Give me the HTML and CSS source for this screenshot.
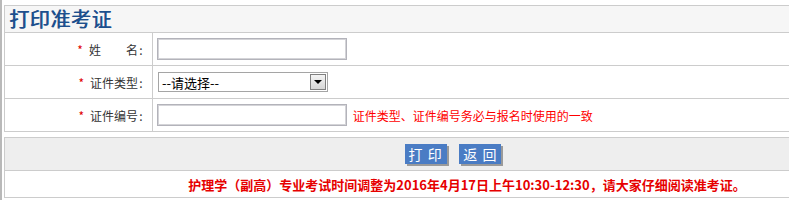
FILE: index.html
```html
<!DOCTYPE html>
<html lang="zh-CN">
<head>
    <meta charset="UTF-8">
    <title>打印准考证</title>
    <link rel="stylesheet" href="styles.css">
</head>
<body>
    <div class="page">
        <table class="form-table">
            <tr>
                <th class="title" colspan="2">打印准考证</th>
            </tr>
            <tr>
                <td class="label"><span class="star">*</span>姓<span class="gap"></span>名<span class="colon">:</span></td>
                <td class="field"><input type="text" class="text-input"></td>
            </tr>
            <tr>
                <td class="label"><span class="star">*</span>证件类型<span class="colon">:</span></td>
                <td class="field">
                    <div class="fake-select">
                        <span class="fake-select-text">--请选择--</span>
                        <span class="fake-select-btn"><span class="arrow"></span></span>
                    </div>
                </td>
            </tr>
            <tr>
                <td class="label"><span class="star">*</span>证件编号<span class="colon">:</span></td>
                <td class="field">
                    <input type="text" class="text-input">
                    <span class="tip">证件类型、证件编号务必与报名时使用的一致</span>
                </td>
            </tr>
        </table>

        <table class="action-table">
            <tr>
                <td class="actions">
                    <button class="btn">打 印</button>
                    <button class="btn">返 回</button>
                </td>
            </tr>
            <tr>
                <td class="notice">护理学（副高）专业考试时间调整为2016年4月17日上午10:30-12:30，请大家仔细阅读准考证。</td>
            </tr>
        </table>
    </div>
</body>
</html>
```

FILE: styles.css
```css
html {
    overflow: hidden;
}

body {
    margin: 0;
    padding: 5px 0 0 2px;
    border-left: 2px solid #b9b9b9;
    min-height: 200px;
    box-sizing: border-box;
    font-family: "SimSun", "Noto Sans CJK SC", sans-serif;
    font-size: 12px;
    color: #333;
}

.page {
    width: 898px;
}

table {
    width: 100%;
    border-collapse: collapse;
}

td, th {
    border: 1px solid #cccccc;
    padding: 0;
}

.title {
    height: 26px;
    background-color: #f6f6f6;
    text-align: left;
    padding-left: 4px;
    font-size: 20px;
    font-weight: normal;
    letter-spacing: 0.6px;
    color: #1d4f8d;
    text-shadow: 0.7px 0 0 #1d4f8d;
    line-height: 26px;
}

.form-table td {
    height: 32px;
}

.label {
    width: 139px;
    text-align: right;
    padding-right: 8px;
    color: #333;
}

.star {
    color: #e00000;
    margin-right: 6px;
}

.gap {
    display: inline-block;
    width: 25px;
}

.colon {
    display: inline-block;
    width: 6px;
    text-align: center;
}

.field {
    padding-left: 4px;
}

.text-input {
    width: 190px;
    height: 22px;
    box-sizing: border-box;
    border: 1px solid #b3b3ba;
    outline: 1px solid #d4d4d8;
    outline-offset: -2px;
    margin: 0;
    vertical-align: middle;
}

.tip {
    color: #f00;
    margin-left: 3px;
    vertical-align: middle;
}

.fake-select {
    display: flex;
    align-items: center;
    width: 170px;
    height: 20px;
    box-sizing: border-box;
    border: 1px solid #a5a5a5;
    margin-left: 1px;
    background: #fff;
}

.fake-select-text {
    flex: 1;
    padding-left: 3px;
    color: #000;
    font-size: 13px;
}

.fake-select-btn {
    width: 16px;
    height: 16px;
    margin-right: 1px;
    box-sizing: border-box;
    border: 1px solid #808080;
    background: linear-gradient(#f4f4f4, #d6d6d6);
    display: flex;
    align-items: center;
    justify-content: center;
}

.arrow {
    width: 0;
    height: 0;
    border-left: 4px solid transparent;
    border-right: 4px solid transparent;
    border-top: 4px solid #000;
}

.action-table {
    margin-top: 5px;
}

.actions {
    height: 32px;
    background-color: #eeeeee;
    text-align: center;
}

.btn {
    width: 42px;
    height: 20px;
    margin: 0 5px;
    padding: 0;
    border: none;
    background-color: #4a7cc4;
    box-shadow: 2px 2px 0 #9a9a9a;
    color: #fff;
    font-family: inherit;
    font-size: 14px;
    letter-spacing: 1px;
    line-height: 20px;
    cursor: pointer;
}

.notice {
    height: 26px;
    text-align: center;
    padding-left: 28px;
    color: #e60000;
    font-weight: bold;
    font-size: 13px;
}
```
